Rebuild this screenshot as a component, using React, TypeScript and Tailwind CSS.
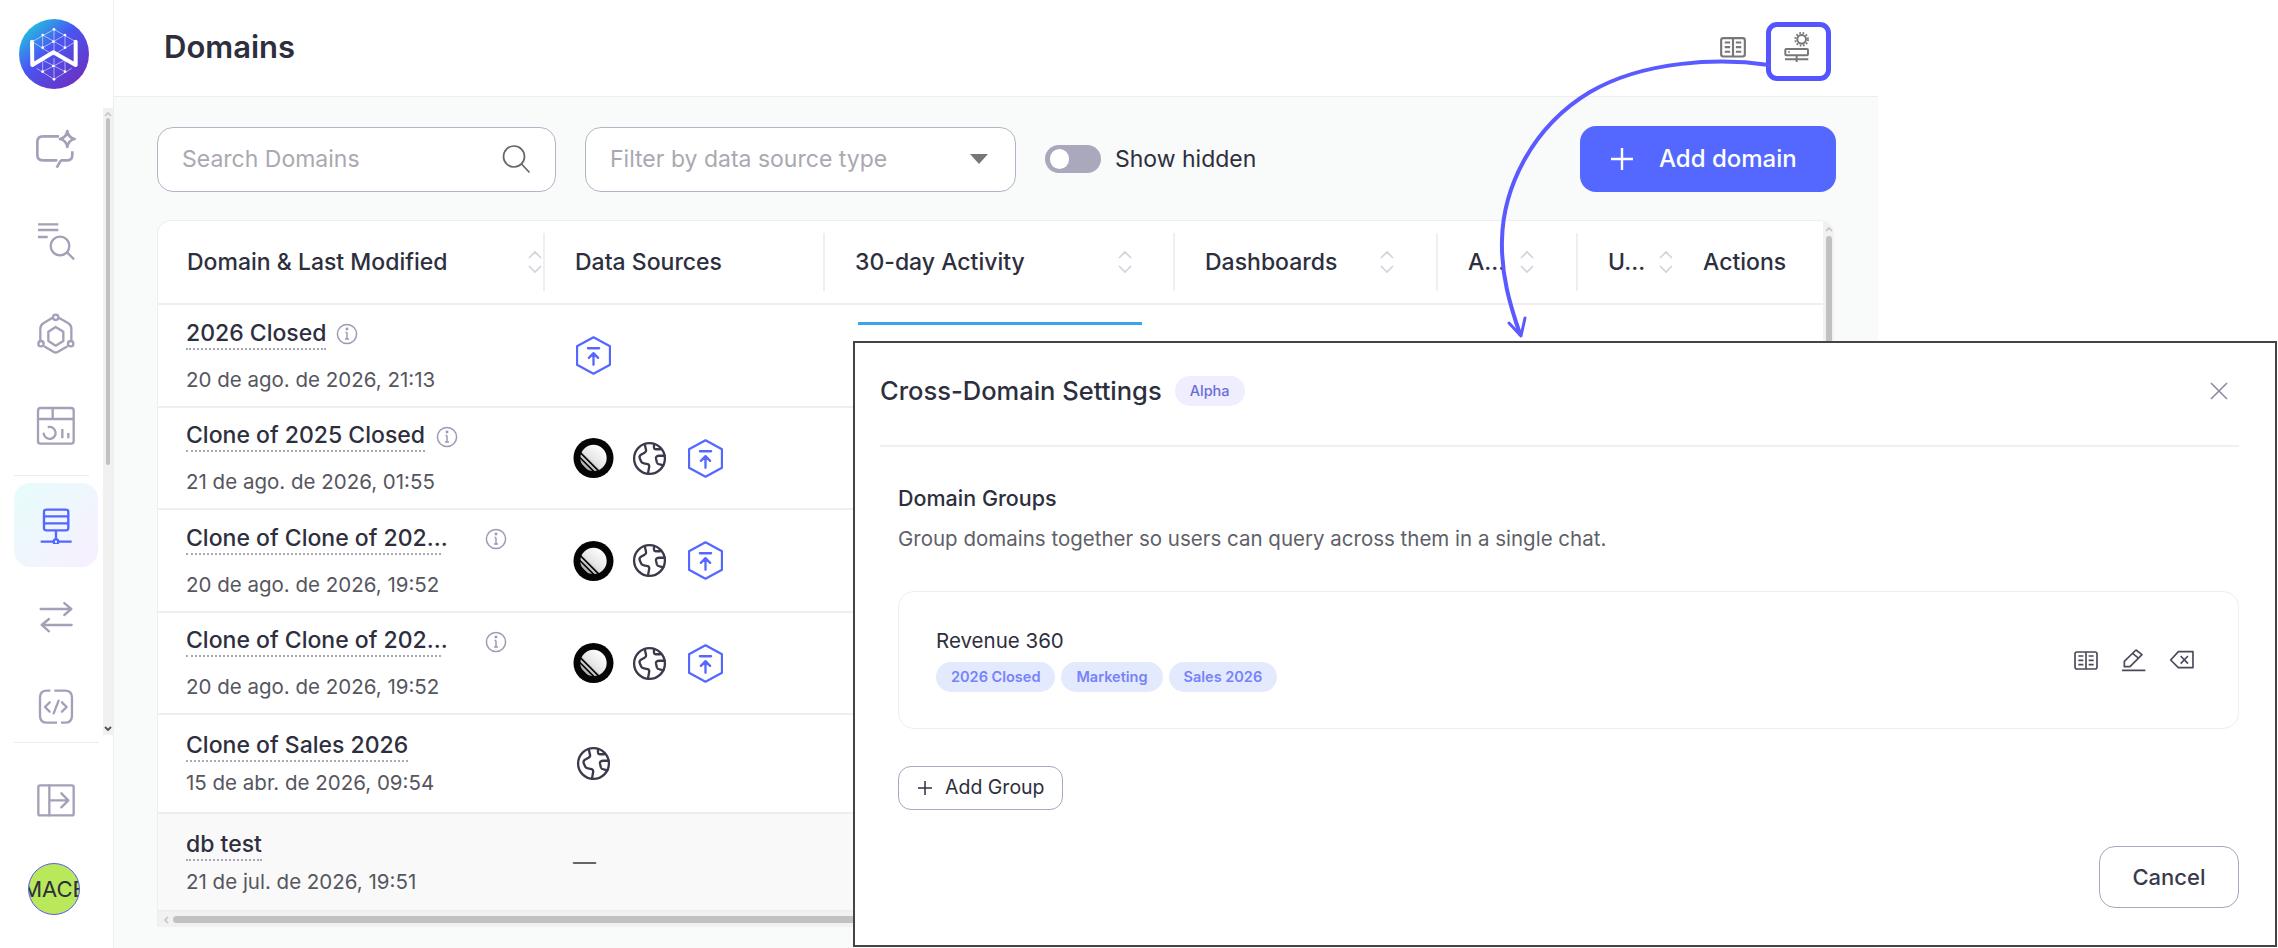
import React from "react";

const G = "#a3a1b8";

function Logo() {
  const pts: [number, number, number, number][] = [
    [162, 88, 227, 125], [162, 88, 97, 125], [128, 105, 195, 143], [195, 105, 128, 143], [162, 88, 162, 160],
    [97, 125, 160, 165], [227, 125, 160, 165], [128, 105, 128, 143], [195, 105, 195, 143],
    [162, 238, 110, 205], [162, 238, 215, 205], [128, 215, 195, 180], [195, 215, 128, 180], [162, 175, 162, 238], [128, 180, 128, 215], [195, 180, 195, 215],
  ];
  return (
    <svg viewBox="57 57 210 210" width="70" height="70">
      <defs>
        <linearGradient id="lg" x1="0.05" y1="0.05" x2="0.85" y2="0.95">
          <stop offset="0" stopColor="#1bd6dc" />
          <stop offset="0.45" stopColor="#4a55f2" />
          <stop offset="1" stopColor="#6d2fc0" />
        </linearGradient>
      </defs>
      <circle cx="162" cy="162" r="105" fill="url(#lg)" />
      {pts.map((p, i) => (
        <line key={i} x1={p[0]} y1={p[1]} x2={p[2]} y2={p[3]} stroke="#fff" strokeOpacity="0.65" strokeWidth="2.5" />
      ))}
      {[[162, 88], [128, 105], [195, 105], [160, 125], [128, 143], [195, 143], [128, 215], [195, 215], [160, 198], [162, 238]].map((p, i) => (
        <circle key={i} cx={p[0]} cy={p[1]} r="4" fill="#fff" />
      ))}
      <path d="M96 125 L97 195 L160 157 L227 195 L227 125" fill="none" stroke="#fff" strokeWidth="12" strokeLinecap="round" strokeLinejoin="round" />
    </svg>
  );
}

function Ic({ vb, w, h, c = G, sw = 8, children }: { vb: string; w: number; h: number; c?: string; sw?: number; children: React.ReactNode }) {
  return (
    <svg viewBox={vb} width={w} height={h} fill="none" stroke={c} strokeWidth={sw} strokeLinecap="round" strokeLinejoin="round">
      {children}
    </svg>
  );
}

const ChatIcon = () => (
  <Ic vb="105 385 130 130" w={43.3} h={43.3}>
    <path d="M180 410H132q-17 0-17 17v38q0 17 17 17h28M160 482h12l-2 0M185 482h20q15 0 15-15v-12M186 482l-13 22" strokeLinecap="butt" />
    <path d="M205 394q3 20 22 24q-19 4-22 24q-3-20-22-24q19-4 22-24z" />
  </Ic>
);
const SearchListIcon = () => (
  <Ic vb="105 665 125 125" w={41.7} h={41.7} sw={7}>
    <path d="M114 675H175M114 692H175M114 713H143" strokeLinecap="butt" />
    <circle cx="180" cy="740" r="28" />
    <path d="M202 760L220 778" />
  </Ic>
);
const HexIcon = () => (
  <Ic vb="105 935 125 125" w={41.7} h={41.7} sw={7}>
    <path d="M167 977L190 991V1019L167 1033L145 1019V991Z" />
    <circle cx="167" cy="948" r="8" />
    <circle cx="123" cy="1027" r="8" />
    <circle cx="212" cy="1027" r="8" />
    <path d="M179 951L205 966Q214 972 214 982V1015M155 951L130 966Q121 972 121 982V1015M135 1036L160 1051Q167 1056 174 1051L200 1036" />
  </Ic>
);
const TableIcon = () => (
  <Ic vb="105 1210 125 125" w={41.7} h={41.7} sw={7}>
    <rect x="114" y="1219" width="107" height="107" rx="8" />
    <path d="M114 1252H221M158 1219V1252M187 1282V1310M205 1294V1310" strokeLinecap="butt" />
    <path d="M146 1276A18 18 0 1 1 131 1296" />
  </Ic>
);
const ServerIcon = () => (
  <Ic vb="110 95 115 115" w={38.3} h={38.3} c="#5468ff" sw={7}>
    <rect x="131" y="106" width="73" height="62" rx="7" />
    <path d="M131 126H204M131 147H204M167 168V195M121 202H158M176 202H214" strokeLinecap="butt" />
    <circle cx="167" cy="202" r="7" />
  </Ic>
);
const SwapIcon = () => (
  <Ic vb="110 380 115 105" w={38.3} h={35} sw={7}>
    <path d="M121 407H212M192 389L213 407L192 425M214 455H125M146 437L124 455L146 474" />
  </Ic>
);
const CodeIcon = () => (
  <Ic vb="112 648 112 112" w={37.3} h={37.3} sw={7}>
    <path d="M152 656H142Q121 656 121 677V731Q121 752 142 752H172M184 752H196Q217 752 217 731V677Q217 656 196 656H164" strokeLinecap="butt" />
    <path d="M150 691L136 705L150 719M187 691L201 705L187 719M177 686L162 724" />
  </Ic>
);
const PanelIcon = () => (
  <Ic vb="105 935 125 105" w={41.7} h={35} sw={7}>
    <rect x="115" y="942" width="106" height="90" rx="5" />
    <path d="M148 942V1032M148 987H204M184 966L205 987L184 1008" />
  </Ic>
);

function Nav({ children, active }: { children: React.ReactNode; active?: boolean }) {
  return (
    <div className={"flex h-[84px] w-[84px] shrink-0 items-center justify-center rounded-[16px] " + (active ? "bg-gradient-to-br from-[#e6fdfb] to-[#f8effe]" : "")}>
      {children}
    </div>
  );
}

function Sort() {
  return (
    <svg width="16" height="24" viewBox="0 0 16 24" fill="none" stroke="#d2d2dd" strokeWidth="1.6" className="shrink-0">
      <path d="M2 8L8 2L14 8M2 16L8 22L14 16" />
    </svg>
  );
}

function Th({ w, label, sort, first }: { w: number; label: string; sort?: boolean; first?: boolean }) {
  return (
    <div style={{ width: w }} className="flex h-full shrink-0 items-center">
      <div className={"flex h-[58px] w-full items-center justify-between " + (first ? "pl-[29px]" : "border-l-2 border-[#eeeef3] pl-[30px]")}>
        <span className="text-[23px] font-medium whitespace-nowrap text-[#2e2f3e]">{label}</span>
        {sort && <Sort />}
      </div>
    </div>
  );
}

function Info({ ml }: { ml: number }) {
  return (
    <svg style={{ marginLeft: ml }} width="22" height="22" viewBox="0 0 22 22" fill="none" stroke="#9c9bb6" strokeWidth="1.5" className="shrink-0">
      <circle cx="11" cy="11" r="9.6" />
      <path d="M11 9.5V16M9 16H13M9.5 9.5H11" />
      <circle cx="11" cy="6" r="0.7" fill="#9c9bb6" />
    </svg>
  );
}

function LinearLogo() {
  return (
    <svg viewBox="0 0 42 42" width="42" height="42">
      <defs>
        <linearGradient id="ll" x1="0.85" y1="0.1" x2="0.15" y2="0.9">
          <stop offset="0" stopColor="#ffffff" />
          <stop offset="0.55" stopColor="#e6e6e6" />
          <stop offset="1" stopColor="#a8a8a8" />
        </linearGradient>
      </defs>
      <circle cx="21" cy="21" r="20.5" fill="#050505" />
      <circle cx="21" cy="21" r="13.5" fill="url(#ll)" />
      <path d="M6 14L28 36M6 19.5L23 36.5M5 24.5L18 37.5" stroke="#050505" strokeWidth="1.7" fill="none" />
    </svg>
  );
}

function Globe() {
  return (
    <svg viewBox="0 0 24 24" width="37" height="37" fill="none" stroke="#3a3a4c" strokeWidth="1.5" strokeLinecap="round" strokeLinejoin="round">
      <circle cx="12" cy="12" r="10" />
      <path d="M8.9 2.6L9.8 6.6Q10 7.6 8.8 8.2L6.4 9.6Q5 10.6 5.8 12.2L6.6 14Q7.2 15 8.4 15.2L10.8 15.6Q12 16 11.8 17.4L11 21.8" />
      <path d="M14.9 2.6V5Q15 6 16 6L19 6M21.9 10.2L18 10.2Q16 10.4 16.2 12L16.8 14.6Q17.2 15.8 18.6 15.8L21 16.4" />
    </svg>
  );
}

function Upload() {
  return (
    <svg viewBox="382 28 106 118" width="35" height="39" fill="none" stroke="#5468ff" strokeWidth="7" strokeLinecap="round" strokeLinejoin="round">
      <path d="M435 32L485 59V115L435 142L385 115V59Z" />
      <path d="M418 65H452M435 115V80M421 94L435 80L449 94" />
    </svg>
  );
}

function Sources({ kind }: { kind: string }) {
  const cell = "flex w-[41px] justify-center";
  if (kind === "dash") return <span className="text-[23px] text-[#666]">—</span>;
  return (
    <div className="flex items-center gap-[15px]">
      {kind === "all" && (
        <>
          <div className={cell}><LinearLogo /></div>
          <div className={cell}><Globe /></div>
        </>
      )}
      {kind === "globe" && <div className={cell}><Globe /></div>}
      {(kind === "all" || kind === "up") && <div className={cell}><Upload /></div>}
    </div>
  );
}

const rows = [
  { n: "2026 Closed", d: "20 de ago. de 2026, 21:13", h: 103, info: 10, kind: "up", gap: "gap-[17px]", bar: true },
  { n: "Clone of 2025 Closed", d: "21 de ago. de 2026, 01:55", h: 102, info: 11, kind: "all", gap: "gap-[17px]" },
  { n: "Clone of Clone of 202...", d: "20 de ago. de 2026, 19:52", h: 103, info: 44, uw: 255, kind: "all", gap: "gap-[17px]" },
  { n: "Clone of Clone of 202...", d: "20 de ago. de 2026, 19:52", h: 102, info: 44, uw: 255, kind: "all", gap: "gap-[17px]" },
  { n: "Clone of Sales 2026", d: "15 de abr. de 2026, 09:54", h: 99, kind: "globe", gap: "gap-[8px]" },
  { n: "db test", d: "21 de jul. de 2026, 19:51", h: 98, kind: "dash", gap: "gap-[8px]", muted: true },
];

function BookIcon({ c, sw, w }: { c: string; sw: number; w: number }) {
  return (
    <svg viewBox="100 60 78 62" width={w} height={(w * 62) / 78} fill="none" stroke={c} strokeWidth={sw} strokeLinejoin="round">
      <rect x="106" y="66" width="66" height="51" rx="6" />
      <path d="M139 66V117M116 78H131M116 91H131M116 104H131M147 78H162M147 91H162M147 104H162" />
    </svg>
  );
}

export default function App() {
  return (
    <div className="relative flex h-[948px] w-[2278px] overflow-hidden bg-white font-['Inter',sans-serif] text-[#2e2f3e]">
      {/* Sidebar */}
      <aside className="flex w-[114px] shrink-0 flex-col border-r border-[#eeeef2]">
        <div className="h-[108px] shrink-0 pt-[19px] pl-[19px]">
          <Logo />
        </div>
        <div className="flex h-[627px] shrink-0 overflow-hidden">
          <div className="flex w-[103px] flex-col gap-[8px] overflow-hidden pl-[14px]">
            <Nav><ChatIcon /></Nav>
            <Nav><SearchListIcon /></Nav>
            <Nav><HexIcon /></Nav>
            <Nav><TableIcon /></Nav>
            <div className="-my-[1px] h-0 w-[75px] shrink-0 border-t border-[#ecebf1]" />
            <Nav active><ServerIcon /></Nav>
            <Nav><SwapIcon /></Nav>
            <div className="-mt-[2px]"><Nav><CodeIcon /></Nav></div>
          </div>
          <div className="flex w-[10px] shrink-0 flex-col items-center bg-[#f1f1f1]">
            <svg width="8" height="6" viewBox="0 0 8 6" fill="none" stroke="#c4c4c4" strokeWidth="1.6" className="mt-[3px] shrink-0"><path d="M1 5L4 2L7 5" /></svg>
            <div className="mt-[1px] h-[347px] w-[4px] shrink-0 rounded-full bg-[#c1c1c1]" />
            <svg width="8" height="6" viewBox="0 0 8 6" fill="none" stroke="#505050" strokeWidth="1.8" className="mt-auto mb-[3px] shrink-0"><path d="M1 1L4 4L7 1" /></svg>
          </div>
        </div>
        <div className="mt-[7px] ml-[14px] h-0 w-[85px] border-t border-[#ecebf1]" />
        <div className="flex h-[114px] w-[84px] items-center justify-center ml-[14px]">
          <PanelIcon />
        </div>
        <div className="ml-[28px] flex h-[52px] w-[52px] items-center justify-center overflow-hidden rounded-full border border-[#5a5af0] bg-[#b9e85a] text-[22px] text-[#2e2f3e] mt-[6px]">
          <span className="whitespace-nowrap">MACE</span>
        </div>
      </aside>

      {/* Main */}
      <main className="flex w-[1764px] shrink-0 flex-col bg-[#f9fafa]">
        <header className="flex h-[97px] shrink-0 items-center justify-between border-b border-[#eeeeee] bg-white pr-[69px] pb-[2px] pl-[50px]">
          <h1 className="text-[31px] font-semibold text-[#2e2f3e]">Domains</h1>
          <div className="flex items-center gap-[37px]">
            <BookIcon c="#777" sw={6} w={28} />
            <div className="relative">
              <svg viewBox="195 92 76 95" width="25.3" height="31.7" fill="none" stroke="#777" strokeWidth="6" className="block">
                <circle cx="248" cy="117" r="13" />
                <circle cx="248" cy="117" r="19" strokeWidth="6" strokeDasharray="5 5" />
                <rect x="199" y="146" width="68" height="19" rx="3" />
                <path d="M198 177H268M233 165V185M208 155H212" />
              </svg>
              <div className="absolute -top-[9px] -right-[22px] -bottom-[18px] -left-[18px] rounded-[11px] border-[5px] border-[#5555ff]" />
            </div>
          </div>
        </header>

        <div className="flex min-h-0 flex-1 flex-col pr-[42px] pl-[43px]">
          <div className="mt-[29px] flex h-[66px] shrink-0 items-center">
            <div className="flex h-[65px] w-[399px] items-center justify-between rounded-[16px] border border-[#b5b4c6] bg-white pr-[24px] pl-[24px]">
              <span className="text-[23px] text-[#a9a9b1]">Search Domains</span>
              <svg width="30" height="30" viewBox="0 0 30 30" fill="none" stroke="#666" strokeWidth="1.7" strokeLinecap="round"><circle cx="13" cy="12.5" r="10.5" /><path d="M20.5 20L28 28" /></svg>
            </div>
            <div className="ml-[29px] flex h-[65px] w-[431px] items-center justify-between rounded-[16px] border border-[#b5b4c6] bg-white pr-[27px] pl-[24px]">
              <span className="text-[23px] text-[#a9a9b1]">Filter by data source type</span>
              <svg width="18" height="10" viewBox="0 0 18 10" fill="#777"><path d="M0 0H18L9 10Z" /></svg>
            </div>
            <div className="ml-[29px] flex h-[28px] w-[56px] items-center rounded-full bg-[#a9a8bd] pl-[5px]">
              <div className="h-[20px] w-[19px] rounded-full bg-white" />
            </div>
            <span className="ml-[14px] text-[23px] text-[#2e2f3e]">Show hidden</span>
            <button className="ml-auto flex h-[66px] w-[256px] items-center rounded-[16px] bg-[#5468ff] pl-[31px] text-white">
              <svg width="22" height="22" viewBox="0 0 22 22" stroke="#fff" strokeWidth="2.4"><path d="M11 0V22M0 11H22" /></svg>
              <span className="ml-[26px] text-[24px] font-medium">Add domain</span>
            </button>
          </div>

          <div className="mt-[28px] flex h-[707px] w-[1677px] shrink-0 flex-col overflow-hidden rounded-t-[14px] border-t border-l border-[#eeeef1] bg-white">
            <div className="flex h-[691px]">
              <div className="w-[1665px] shrink-0">
                <div className="flex h-[84px] items-center border-b-2 border-[#eeeef3]">
                  <Th first w={385} label="Domain & Last Modified" sort />
                  <Th w={280} label="Data Sources" />
                  <div className="flex h-full w-[350px] shrink-0 items-center pr-[40px]"><Th w={310} label="30-day Activity" sort /></div>
                  <div className="flex h-full w-[263px] shrink-0 items-center pr-[41px]"><Th w={222} label="Dashboards" sort /></div>
                  <div className="flex h-full w-[140px] shrink-0 items-center pr-[41px]"><Th w={99} label="A..." sort /></div>
                  <Th w={98} label="U..." sort />
                  <div className="flex h-full items-center pl-[29px] text-[23px] font-medium">Actions</div>
                </div>
                {rows.map((r, i) => (
                  <div key={i} style={{ height: r.h }} className={"flex border-b-2 border-[#eeeeef] " + (r.muted ? "bg-[#f9f9f9]" : "bg-white")}>
                    <div className={"flex w-[385px] shrink-0 flex-col justify-center pl-[28px] " + r.gap}>
                      <div className="flex items-center">
                        <div style={r.uw ? { width: r.uw } : undefined} className="border-b-2 border-dotted border-[#a9a9b5] pb-[1px] text-[23px] leading-[28px] font-medium whitespace-nowrap">
                          {r.n}
                        </div>
                        {r.info !== undefined && <Info ml={r.info} />}
                      </div>
                      <div className="text-[20.5px] leading-[26px] text-[#56565f]">{r.d}</div>
                    </div>
                    <div className="flex w-[280px] shrink-0 items-center pl-[30px]">
                      <Sources kind={r.kind} />
                    </div>
                    {r.bar && <div className="mt-[17px] ml-[35px] h-[3px] w-[284px] bg-[#3ca4e8]" />}
                  </div>
                ))}
              </div>
              <div className="flex w-[12px] shrink-0 flex-col items-center bg-[#f1f1f1]">
                <svg width="8" height="6" viewBox="0 0 8 6" fill="none" stroke="#c4c4c4" strokeWidth="1.6" className="mt-[5px] shrink-0"><path d="M1 5L4 2L7 5" /></svg>
                <div className="mt-[4px] h-[300px] w-[6px] shrink-0 rounded-full bg-[#c1c1c1]" />
              </div>
            </div>
            <div className="flex h-[16px] items-center bg-[#f1f1f1]">
              <svg width="6" height="8" viewBox="0 0 6 8" fill="none" stroke="#c4c4c4" strokeWidth="1.6" className="ml-[5px] shrink-0"><path d="M5 1L2 4L5 7" /></svg>
              <div className="ml-[4px] h-[7px] w-[900px] rounded-full bg-[#c1c1c1]" />
            </div>
          </div>
        </div>
      </main>

      {/* Annotation arrow */}
      <svg className="pointer-events-none absolute top-0 left-0" width="2278" height="948" fill="none" stroke="#5a5aff" strokeLinecap="round" strokeLinejoin="round">
        <path d="M1769 65C1720 58 1645 60 1590 92C1530 128 1503 190 1502 240C1501 275 1510 305 1520 334" strokeWidth="4" />
        <path d="M1509 323L1521 336L1525 318" strokeWidth="3" />
      </svg>

      {/* Modal */}
      <div className="absolute top-[341px] left-[853px] flex h-[606px] w-[1424px] flex-col border-2 border-[#444] bg-white px-[25px]">
        <div className="mr-[11px] flex h-[104px] shrink-0 items-center justify-between border-b-2 border-[#f0f0f2] pr-[11px] pb-[6px]">
          <div className="flex items-center gap-[13px]">
            <span className="text-[25.5px] font-medium text-[#2e2f3e]">Cross-Domain Settings</span>
            <span className="flex h-[30px] w-[70px] items-center justify-center rounded-full bg-[#eeeefe] text-[14.5px] font-medium text-[#6b6bdc]">Alpha</span>
          </div>
          <svg width="18" height="18" viewBox="0 0 18 18" stroke="#8b8aa3" strokeWidth="1.6"><path d="M1 1L17 17M17 1L1 17" /></svg>
        </div>
        <div className="mr-[11px] flex min-h-0 flex-1 flex-col pl-[18px]">
          <div className="mt-[36px] text-[21.5px] leading-[30px] font-medium">Domain Groups</div>
          <div className="mt-[12px] text-[20.5px] leading-[28px] text-[#5f5f69]">Group domains together so users can query across them in a single chat.</div>
          <div className="mt-[38px] flex h-[138px] shrink-0 items-center justify-between rounded-[16px] border border-[#eeeef3] pr-[43px] pl-[37px]">
            <div className="flex flex-col gap-[8px]">
              <div className="text-[20.5px] leading-[26px]">Revenue 360</div>
              <div className="flex gap-[6px]">
                {["2026 Closed", "Marketing", "Sales 2026"].map((c) => (
                  <span key={c} className="flex h-[30px] items-center rounded-full bg-[#e3eafd] px-[15px] text-[14.5px] font-semibold text-[#7682fb]">{c}</span>
                ))}
              </div>
            </div>
            <div className="flex items-center gap-[22px]">
              <BookIcon c="#4a4a5a" sw={5} w={26} />
              <svg viewBox="245 52 78 72" width="26" height="24" fill="none" stroke="#4a4a5a" strokeWidth="5" strokeLinejoin="round">
                <path d="M255 108V92L290 58L308 72L272 108Z" />
                <path d="M280 68L298 83M248 119H318" />
              </svg>
              <svg viewBox="390 62 78 58" width="26" height="19.3" fill="none" stroke="#4a4a5a" strokeWidth="5" strokeLinejoin="round">
                <path d="M395 92L418 67H462V115H418Z" />
                <path d="M425 80L447 103M447 80L425 103" />
              </svg>
            </div>
          </div>
          <button className="mt-[37px] flex h-[44px] w-[165px] shrink-0 items-center rounded-[13px] border border-[#a9a8bd] pl-[19px]">
            <svg width="14" height="14" viewBox="0 0 14 14" stroke="#2e2f3e" strokeWidth="1.5"><path d="M7 0V14M0 7H14" /></svg>
            <span className="ml-[13px] text-[19.5px]">Add Group</span>
          </button>
          <button className="mt-[36px] flex h-[62px] w-[140px] shrink-0 items-center justify-center self-end rounded-[16px] border border-[#a9a8bd] text-[22px] font-medium text-[#3a3a4c]">Cancel</button>
        </div>
      </div>
    </div>
  );
}
